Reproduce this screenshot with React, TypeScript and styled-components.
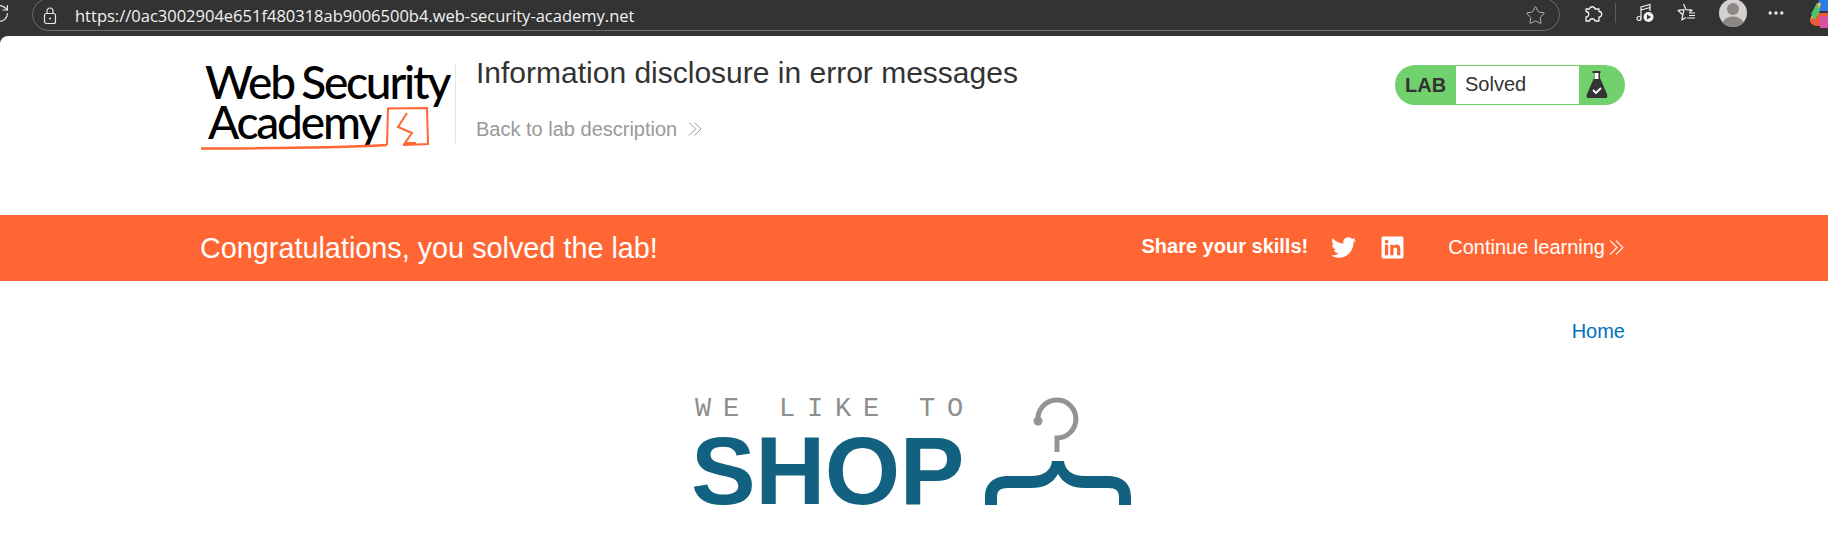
import React, { FC } from 'react'
import styled, { createGlobalStyle } from 'styled-components'
import { FaTwitter, FaLinkedin } from 'react-icons/fa'
import { RotateCw, Star, MoreHorizontal } from 'lucide-react'

const Global = createGlobalStyle`
  html, body {
    margin: 0;
    height: 548px;
    overflow: hidden;
    background: #333333;
    font-family: "Liberation Sans", Arial, sans-serif;
  }
`

const Toolbar = styled.div`
  height: 36px;
  display: flex;
  align-items: flex-start;
  background: #333333;
  color: #e8e8e8;
  overflow: hidden;
`

const Reload = styled.div`
  width: 43px;
  height: 31px;
  margin-left: -11px;
  padding-top: 3px;
  flex: none;
  box-sizing: border-box;
`

const AddressPill = styled.div`
  width: 1528px;
  height: 33px;
  margin-top: -2px;
  box-sizing: border-box;
  display: flex;
  align-items: center;
  padding: 2px 13px 0 9px;
  border: 1px solid #6e6e6e;
  border-radius: 17px;
  flex: none;
`

const Url = styled.span`
  margin-left: 17px;
  font-family: "Open Sans", "Liberation Sans", sans-serif;
  font-size: 16.5px;
  color: #f2f2f2;
  flex: 1;
`

const ToolIcons = styled.div`
  display: flex;
  align-items: center;
  height: 24px;
  margin-left: 22px;
  margin-top: 1px;
`

const ToolDivider = styled.div`
  width: 1px;
  height: 20px;
  margin: 0 19px 0 12px;
  background: #5c5c5c;
`

const ToolGap = styled.div<{ $width: number }>`
  width: ${(p) => p.$width}px;
  flex: none;
`

const Avatar = styled.div`
  width: 28px;
  height: 28px;
  margin: 0 19px 0 22px;
  border-radius: 50%;
  overflow: hidden;
  background: #d3d1cf;
  flex: none;
`

const Main = styled.main`
  height: 512px;
  background: #ffffff;
  border-top-left-radius: 8px;
  overflow: hidden;
`

const Header = styled.header`
  height: 179px;
  box-sizing: border-box;
  padding: 20px 203px 0 200px;
  display: flex;
  align-items: flex-start;
`

const Logo = styled.div`
  position: relative;
  width: 255px;
  height: 78px;
  margin-top: 9px;
  display: flex;
  flex-direction: column;
  gap: 6px;
  flex: none;
  border-right: 1px solid #e4e4e4;
  color: #000;
  font-family: Lato, "Liberation Sans", sans-serif;
  font-weight: 500;
  font-size: 46px;
  line-height: 34px;
  letter-spacing: -2.2px;
  word-spacing: -2px;
  white-space: nowrap;
`

const LogoLine = styled.div<{ $inset: number }>`
  margin-left: ${(p) => p.$inset}px;
`

const LogoMark = styled.svg`
  position: absolute;
  left: 0;
  top: 0;
`

const TitleBlock = styled.div`
  padding-left: 20px;
  flex: 1;
`

const Title = styled.h2`
  margin: 0;
  font-size: 30px;
  font-weight: 400;
  line-height: 34px;
  color: #333332;
`

const BackLink = styled.a`
  display: flex;
  align-items: center;
  gap: 10px;
  margin-top: 27px;
  font-size: 20px;
  line-height: 24px;
  color: #999999;
`

const LabStatus = styled.div`
  width: 230px;
  height: 40px;
  margin-top: 9px;
  box-sizing: border-box;
  display: flex;
  background: #70d16d;
  border-radius: 20px;
  overflow: hidden;
  flex: none;
`

const LabTag = styled.span`
  width: 61px;
  padding-left: 10px;
  box-sizing: border-box;
  font-size: 20px;
  font-weight: 700;
  line-height: 40px;
  color: #333332;
`

const LabValue = styled.span`
  width: 123px;
  height: 38px;
  margin-top: 1px;
  padding-left: 9px;
  box-sizing: border-box;
  background: #fff;
  font-size: 20px;
  line-height: 37px;
  color: #333332;
`

const LabFlask = styled.div`
  flex: 1;
  display: flex;
  padding: 5px 0 0 7px;
`

const Banner = styled.section`
  height: 66px;
  box-sizing: border-box;
  padding: 0 203px 0 200px;
  display: flex;
  align-items: center;
  background: #ff6633;
  color: #fff;
`

const BannerTitle = styled.h4`
  margin: 0;
  font-size: 28.8px;
  font-weight: 400;
  flex: 1;
`

const ShareLabel = styled.span`
  font-size: 20px;
  font-weight: 700;
  margin-bottom: 4px;
`

const ShareIcon = styled.a<{ $gap: number }>`
  display: flex;
  margin-left: ${(p) => p.$gap}px;
  margin-bottom: 2px;
  color: #fff;
`

const Continue = styled.a`
  display: flex;
  align-items: center;
  gap: 3px;
  margin-left: 43px;
  margin-bottom: 2px;
  font-size: 20px;
  color: #fff;
`

const Nav = styled.nav`
  display: flex;
  justify-content: flex-end;
  padding: 38px 203px 0 0;
`

const HomeLink = styled.a`
  font-size: 20px;
  line-height: 24px;
  color: #0071bc;
`

const ShopLogo = styled.div`
  display: flex;
  align-items: flex-end;
  margin: 54px 0 0 693px;
`

const ShopWords = styled.div`
  width: 292px;
  display: flex;
  flex-direction: column;
  margin-bottom: -2px;
`

const ShopTag = styled.span`
  font-family: "Liberation Mono", monospace;
  font-size: 27px;
  line-height: 22px;
  letter-spacing: 11.8px;
  white-space: pre;
  color: #8e8e8e;
  margin: 1px 0 0 2px;
`

const ShopName = styled.span`
  margin: 15px 0 0 -2px;
  font-size: 97px;
  font-weight: 700;
  line-height: 72px;
  letter-spacing: -0.5px;
  color: #126180;
`

const Chevrons: FC<{ color: string; size?: number }> = ({ color, size = 16 }) => (
  <svg width={size} height={size} viewBox="0 0 16 16" fill="none" stroke={color} strokeWidth="1">
    <path d="M2 1.5 8.5 8 2 14.5M7.500 1.500 14 8l-6.500 6.500" />
  </svg>
)

const LockIcon = () => (
  <svg width="16" height="18" viewBox="0 0 16 18" fill="none" stroke="#e8e8e8" strokeWidth="1.200">
    <rect x="2.500" y="6.500" width="11" height="10" rx="2" />
    <path d="M5 6.500V4a3 3 0 0 1 6 0v2.500" />
    <circle cx="8" cy="11.500" r="1" fill="#e8e8e8" stroke="none" />
  </svg>
)

const ExtensionsIcon = () => (
  <svg width="21" height="21" viewBox="0 0 21 21" fill="none" stroke="#f2f2f2" strokeWidth="1.300" strokeLinejoin="round">
    <path d="M4 6H7.500A2.800 2.800 0 0 1 13 6H17V8.500A2.600 2.600 0 0 1 17 14V18H13A2.800 2.800 0 0 0 7.500 18H4V14A2.600 2.600 0 0 0 4 8.500Z" />
  </svg>
)

const MusicIcon = () => (
  <svg width="20" height="20" viewBox="0 0 20 20" fill="none" stroke="#f2f2f2" strokeWidth="1.200">
    <circle cx="4" cy="15.500" r="2" />
    <path d="M6 15.500V4l9-2.500V8M6 7l9-2.500" />
    <circle cx="13.500" cy="14" r="5" fill="#f2f2f2" stroke="none" />
    <path d="m12 11.500 4 2.500-4 2.500z" fill="#333" stroke="none" />
  </svg>
)

const FavoritesIcon = () => (
  <svg width="22" height="22" viewBox="0 0 22 22" fill="none" stroke="#f2f2f2" strokeWidth="1.200">
    <path d="M8.500 2 11 7.600l6 .6-2.500 2.200M6.800 18l1-5L3 8.300l6-.7z" strokeLinejoin="round" />
    <path d="M6.800 18l4.200-2.400M14 11h6M14 13.500h6M12 16h8" />
  </svg>
)

const AvatarFace = () => (
  <svg width="28" height="28" viewBox="0 0 28 28">
    <circle cx="14" cy="10" r="6" fill="#8a8785" />
    <ellipse cx="14" cy="26" rx="11" ry="8.500" fill="#8a8785" />
  </svg>
)

const Copilot = () => (
  <svg width="24" height="30" viewBox="0 0 24 30">
    <path d="M10 4C12 0 18 0 24 0v13H8z" fill="#2b7de9" />
    <path d="M2 22 8 7c1-2 3-2 5-2l-5 18z" fill="#f5c542" />
    <path d="M2 22c0 4 4 6 8 6h14V15H11z" fill="#ea5a3c" />
    <path d="M12 18h12v12H12z" fill="#d94fa8" />
    <path d="M3 16 9 5l3 8-5 9z" fill="#4dc26a" />
  </svg>
)

const AcademyMark = () => (
  <LogoMark width="255" height="90" viewBox="0 0 255 90" fill="none">
    <path d="M1 83.500C60 83.500 130 83 187 80" stroke="#ff6633" strokeWidth="2.500" />
    <path d="M187 80 188 43.500 227 43 228 79 203 80" stroke="#ff6633" strokeWidth="2" />
    <path d="M207 48 198 62 212 68 205 78H216" stroke="#ff6633" strokeWidth="2" />
  </LogoMark>
)

const Flask = () => (
  <svg width="22" height="30" viewBox="0 0 22 30">
    <rect x="6.500" y="1" width="8" height="2" fill="#333332" />
    <path d="M8 3v5L1 24c-1 3 0 4 2 4h16c2 0 3-1 2-4L14 8V3z" fill="#333332" />
    <rect x="8.500" y="3" width="4" height="6" fill="#fff" />
    <path d="m7 20 3 3 5-5" stroke="#fff" strokeWidth="1.800" fill="none" />
  </svg>
)

const Hanger = () => (
  <svg width="146" height="108" viewBox="0 0 146 108" fill="none">
    <path d="M53 24A19 19 0 1 1 72 41V55" stroke="#939393" strokeWidth="5" />
    <circle cx="53" cy="24" r="4.500" fill="#939393" />
    <path
      d="M67 64H79C80 73 87 79 100 79H122C137 79 146 86 146 100V108H134V100C134 94 131 91 123 91H100C87 91 79 87 73 77C67 87 59 91 46 91H23C15 91 12 94 12 100V108H0V100C0 86 9 79 24 79H46C59 79 66 73 67 64Z"
      fill="#126180"
    />
  </svg>
)

const App: FC = () => {
  return (
    <>
      <Global />
      <Toolbar>
        <Reload>
          <RotateCw size={21} strokeWidth={1.4} />
        </Reload>
        <AddressPill>
          <LockIcon />
          <Url>https://0ac3002904e651f480318ab9006500b4.web-security-academy.net</Url>
          <Star size={21} strokeWidth={1.1} color="#bdbdbd" />
        </AddressPill>
        <ToolIcons>
          <ExtensionsIcon />
          <ToolDivider />
          <MusicIcon />
          <ToolGap $width={20} />
          <FavoritesIcon />
          <Avatar>
            <AvatarFace />
          </Avatar>
          <MoreHorizontal size={20} strokeWidth={2} />
          <ToolGap $width={22} />
          <Copilot />
        </ToolIcons>
      </Toolbar>
      <Main>
        <Header>
          <Logo>
            <LogoLine $inset={5}>Web Security</LogoLine>
            <LogoLine $inset={8}>Academy</LogoLine>
            <AcademyMark />
          </Logo>
          <TitleBlock>
            <Title>Information disclosure in error messages</Title>
            <BackLink>
              Back to lab description <Chevrons color="#999999" />
            </BackLink>
          </TitleBlock>
          <LabStatus>
            <LabTag>LAB</LabTag>
            <LabValue>Solved</LabValue>
            <LabFlask>
              <Flask />
            </LabFlask>
          </LabStatus>
        </Header>
        <Banner>
          <BannerTitle>Congratulations, you solved the lab!</BannerTitle>
          <ShareLabel>Share your skills!</ShareLabel>
          <ShareIcon $gap={23}>
            <FaTwitter size={25} />
          </ShareIcon>
          <ShareIcon $gap={24}>
            <FaLinkedin size={25} />
          </ShareIcon>
          <Continue>
            Continue learning <Chevrons color="#ffffff" size={17} />
          </Continue>
        </Banner>
        <Nav>
          <HomeLink>Home</HomeLink>
        </Nav>
        <ShopLogo>
          <ShopWords>
            <ShopTag>WE LIKE TO</ShopTag>
            <ShopName>SHOP</ShopName>
          </ShopWords>
          <Hanger />
        </ShopLogo>
      </Main>
    </>
  )
}

export default App
